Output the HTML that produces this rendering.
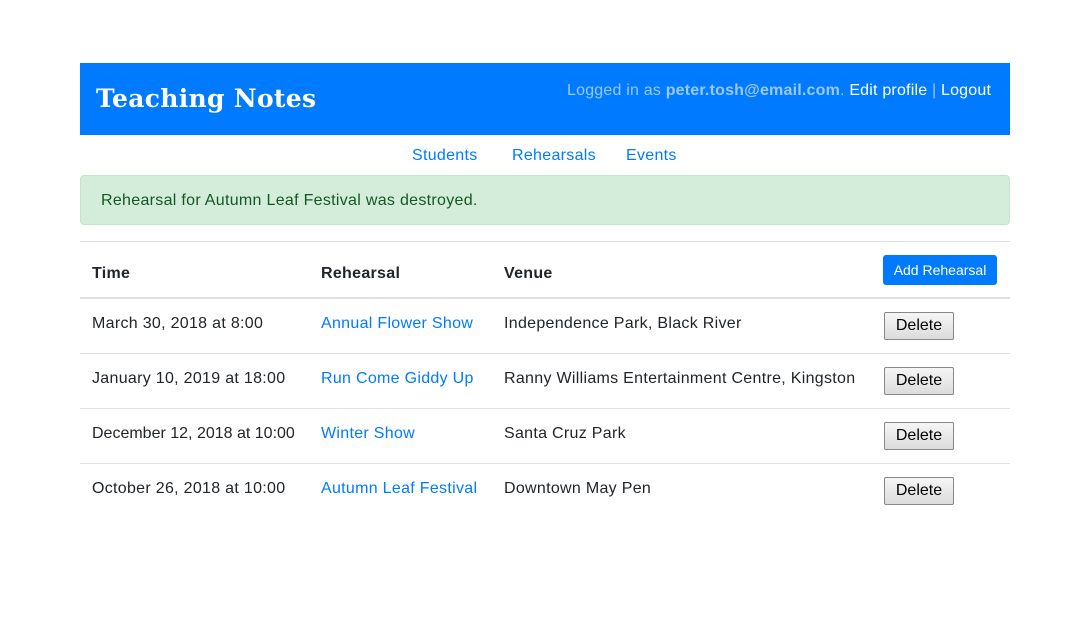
<!DOCTYPE html>
<html><head><meta charset="utf-8"><style>
body{margin:0;background:#fff;font-family:"Liberation Sans",sans-serif;color:#212529;width:1086px;height:621px;position:relative;overflow:hidden;letter-spacing:0.3px}
.a{position:absolute;white-space:nowrap}
.hdr{position:absolute;left:80px;top:63px;width:930px;height:72px;background:#007bff}
.link{color:#007bff;font-size:16px}
.line{position:absolute;left:80px;width:930px;height:1px;background:#dee2e6}
.td{font-size:16px}
.del{position:absolute;left:884px;width:68px;height:26px;border:1px solid #888;border-radius:2px;background:linear-gradient(#f6f6f6,#dcdcdc);font-size:16px;text-align:center;line-height:26px;color:#000;letter-spacing:0}
</style></head><body>
<div class="hdr"></div>
<div class="a" style="left:96px;top:84px;font:bold 25px 'DejaVu Serif',serif;color:#fff;letter-spacing:0.3px">Teaching Notes</div>
<div class="a" style="left:567px;top:82px;font-size:16px;color:#9cc8ff;letter-spacing:0.2px">Logged in as <b>peter.tosh@email.com</b>. <span style="color:#fff">Edit profile</span> | <span style="color:#fff">Logout</span></div>
<div class="a link" style="left:412px;top:147px">Students</div>
<div class="a link" style="left:512px;top:147px">Rehearsals</div>
<div class="a link" style="left:626px;top:147px">Events</div>
<div style="position:absolute;left:80px;top:175px;width:928px;height:48px;background:#d4edda;border:1px solid #c3e6cb;border-radius:4px"></div>
<div class="a" style="left:101px;top:192px;font-size:16px;color:#155724">Rehearsal for Autumn Leaf Festival was destroyed.</div>
<div class="line" style="top:241px"></div>
<div class="a" style="left:92px;top:265px;font-size:16px;font-weight:bold">Time</div>
<div class="a" style="left:321px;top:265px;font-size:16px;font-weight:bold">Rehearsal</div>
<div class="a" style="left:504px;top:265px;font-size:16px;font-weight:bold">Venue</div>
<div class="a" style="left:883px;top:255px;width:114px;height:30px;background:#007bff;border-radius:3px;color:#fff;font-size:14px;text-align:center;line-height:30px;letter-spacing:0">Add Rehearsal</div>
<div class="line" style="top:297px;height:2px"></div>
<div class="a td" style="left:92px;top:315px">March 30, 2018 at 8:00</div>
<div class="a link" style="left:321px;top:315px">Annual Flower Show</div>
<div class="a td" style="left:504px;top:315px">Independence Park, Black River</div>
<div class="del" style="top:312px">Delete</div>
<div class="line" style="top:353px"></div>
<div class="a td" style="left:92px;top:370px">January 10, 2019 at 18:00</div>
<div class="a link" style="left:321px;top:370px">Run Come Giddy Up</div>
<div class="a td" style="left:504px;top:370px">Ranny Williams Entertainment Centre, Kingston</div>
<div class="del" style="top:367px">Delete</div>
<div class="line" style="top:408px"></div>
<div class="a td" style="left:92px;top:425px;letter-spacing:0">December 12, 2018 at 10:00</div>
<div class="a link" style="left:321px;top:425px">Winter Show</div>
<div class="a td" style="left:504px;top:425px">Santa Cruz Park</div>
<div class="del" style="top:422px">Delete</div>
<div class="line" style="top:463px"></div>
<div class="a td" style="left:92px;top:480px">October 26, 2018 at 10:00</div>
<div class="a link" style="left:321px;top:480px">Autumn Leaf Festival</div>
<div class="a td" style="left:504px;top:480px">Downtown May Pen</div>
<div class="del" style="top:477px">Delete</div>
</body></html>
